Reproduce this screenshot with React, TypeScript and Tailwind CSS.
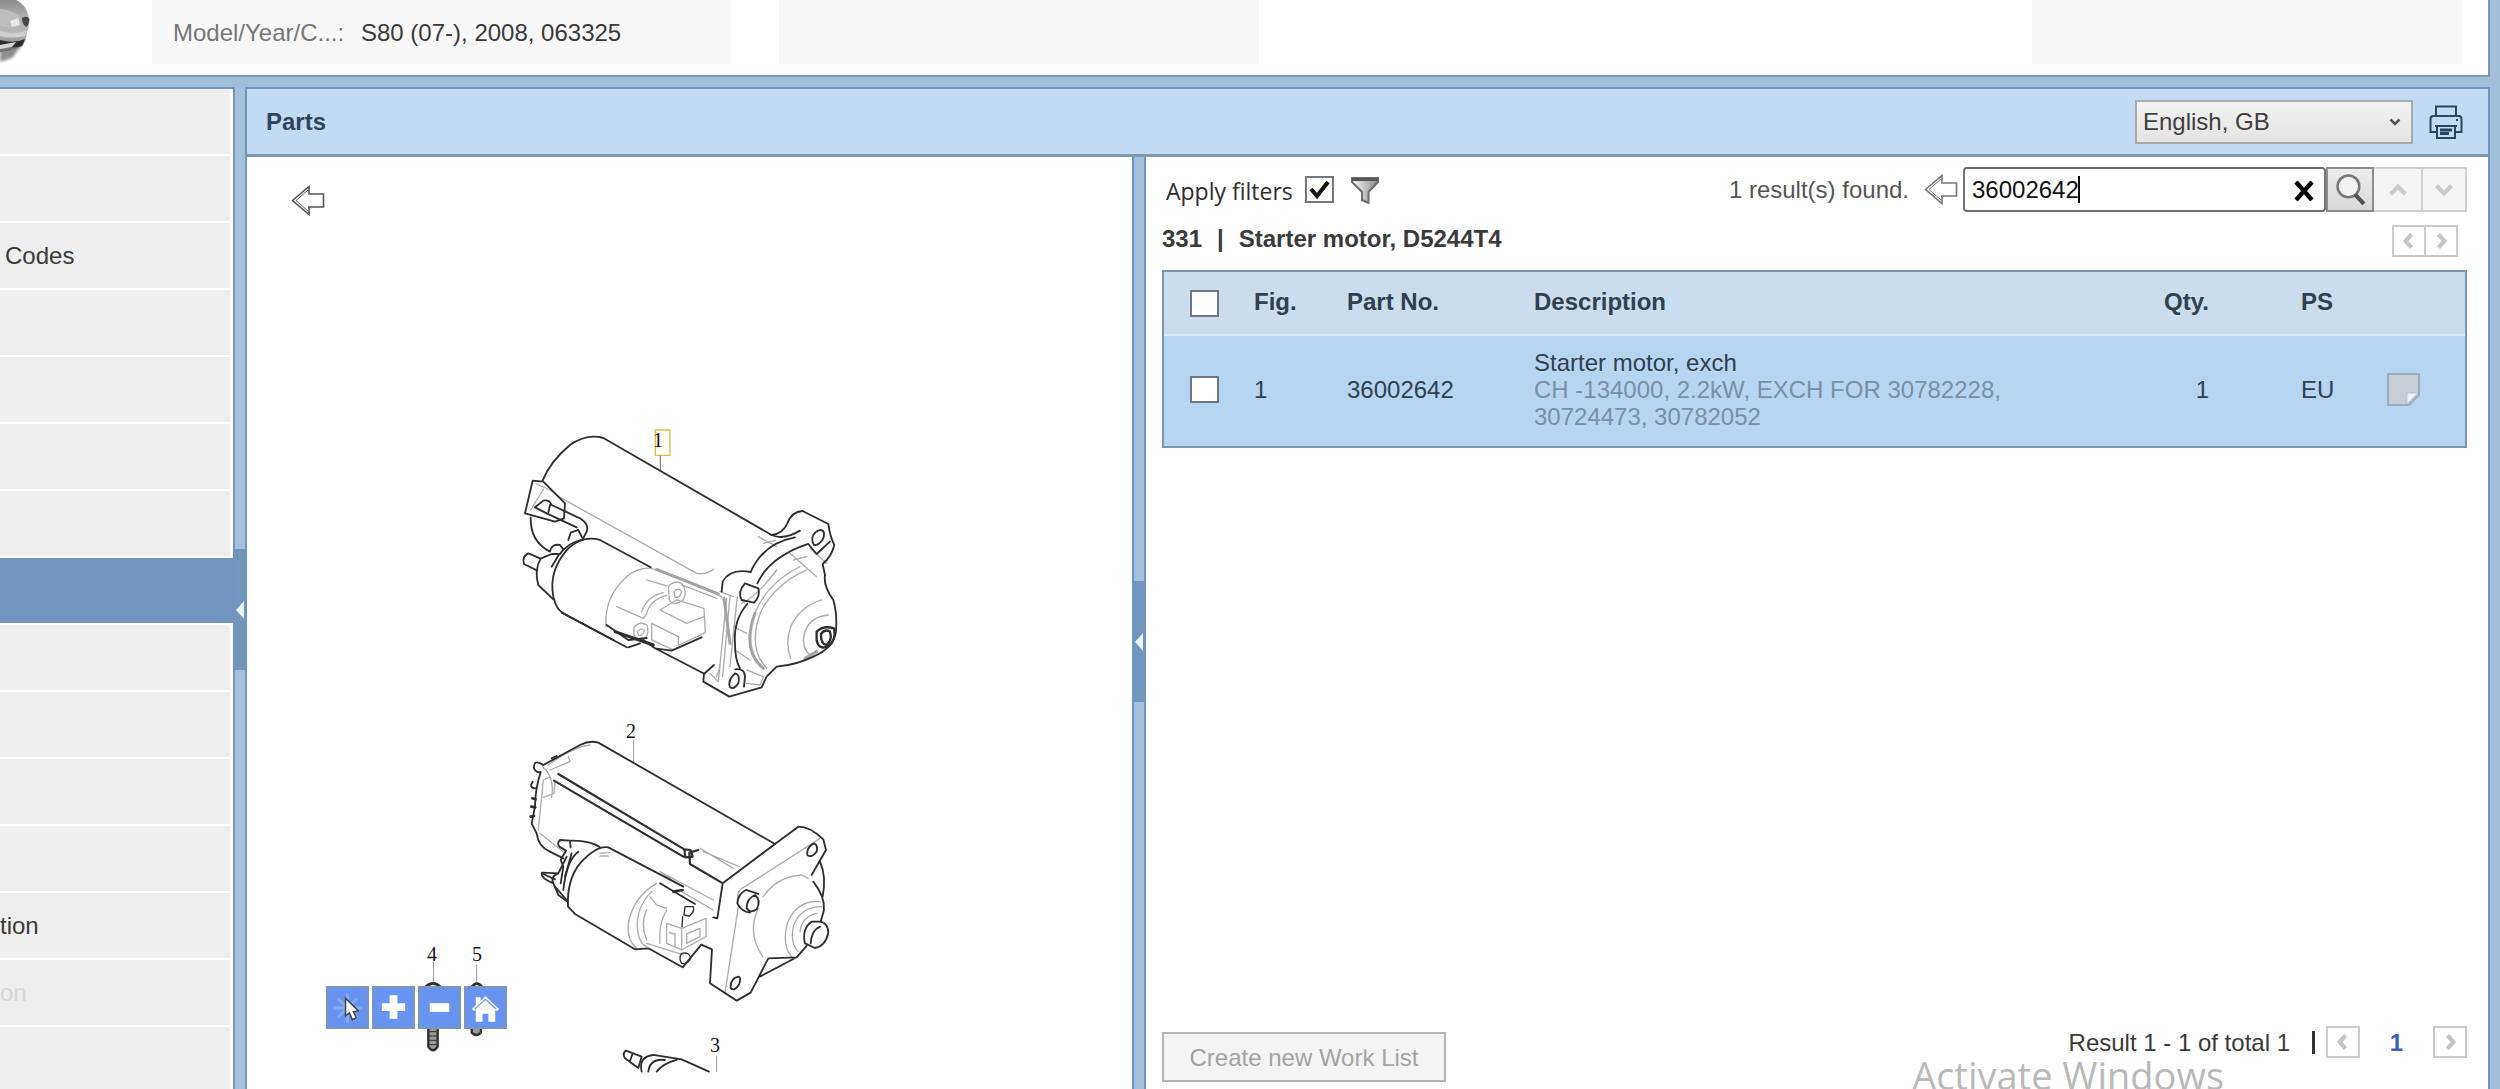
import React from "react";

const sidebarItems = [
  { label: "" },
  { label: "" },
  { label: "Codes", className: "pl-[5px]" },
  { label: "" },
  { label: "" },
  { label: "" },
  { label: "" },
  { label: "", selected: true },
  { label: "" },
  { label: "" },
  { label: "" },
  { label: "" },
  { label: "tion" },
  { label: "on", disabled: true },
  { label: "" },
  { label: "" },
];

type Direction = "left" | "right" | "up" | "down";

const chevrons: Record<Direction, string> = {
  left: "M15 4 L8 12 L15 20",
  right: "M9 4 L16 12 L9 20",
  up: "M3 17 L12 8 L21 17",
  down: "M3 7 L12 16 L21 7",
};

function Chevron({ direction, className }: { direction: Direction; className: string }) {
  return (
    <svg viewBox="0 0 24 24" fill="none" stroke="currentColor" strokeWidth="5" className={className} aria-hidden="true">
      <path d={chevrons[direction]} />
    </svg>
  );
}

function BackArrow({ className }: { className: string }) {
  return (
    <svg viewBox="0 0 34 30" fill="#fff" stroke="currentColor" strokeWidth="1.6" className={className} aria-hidden="true">
      <path d="M1.5 15 L18 1 V8.5 H32.5 V21.5 H18 V29 Z" />
      <path d="M5 15 L17 4.5 M5 15 L17 25.5" strokeWidth="1" />
    </svg>
  );
}

function CarPhoto() {
  return (
    <svg viewBox="0 0 60 64" className="h-16 w-[60px] shrink-0" role="img" aria-label="Vehicle">
      <defs>
        <linearGradient id="carBody" x1="0" y1="0" x2="0" y2="1">
          <stop offset="0" stopColor="#8b8b8b" />
          <stop offset="0.3" stopColor="#adadad" />
          <stop offset="0.65" stopColor="#b9b9b9" />
          <stop offset="1" stopColor="#6a6a6a" />
        </linearGradient>
        <filter id="carShadow" x="-20%" y="-60%" width="140%" height="220%">
          <feGaussianBlur stdDeviation="1.8" />
        </filter>
      </defs>
      <path d="M0 50 L22 45 L12 58 L0 62 Z" fill="#8f8f8f" filter="url(#carShadow)" />
      <path d="M0 0 H16 Q27 5 29 18 Q30 25 27 32 Q26 42 22 46 Q14 51 0 52 Z" fill="url(#carBody)" />
      <path d="M0 9 Q12 10 20 16 L18 27 Q8 28 0 26 Z" fill="#bdbdbd" />
      <path d="M10 21 L18 18 L20 25 L12 27 Z" fill="#e6e6e6" />
      <path d="M22 18 Q27 15 29.500 19 Q29 25 26 27 Q22 24 22 18 Z" fill="#474747" />
      <path d="M0 31 Q12 35 26 31 L25 36 Q12 39 0 36 Z" fill="#d0d0d0" />
      <path d="M0 40 Q14 44 25 39 L22 46 Q12 49 0 46 Z" fill="#2f2f2f" />
      <path d="M0 45 L16 42 L12 47 L0 49 Z" fill="#d5d5d5" />
    </svg>
  );
}

function PartsDrawing() {
  return (
    <svg
      viewBox="0 0 884 932"
      className="absolute top-0 left-0 h-[932px] w-[884px]"
      fill="none"
      stroke="#2e2e2e"
      strokeLinecap="round"
      strokeLinejoin="round"
      role="img"
      aria-label="Starter motor exploded view"
    >
      <g transform="translate(253 253) scale(0.3333)" strokeWidth="5.500">
        <rect x="466" y="60" width="44" height="76" fill="#fffdf0" stroke="#d9bd5e" strokeWidth="4" />
        <path d="M481 138 V180" stroke="#666" strokeWidth="3" />
        <g stroke="#acacac" strokeWidth="4">
          <path d="M110 222 L150 240 L180 262 L590 490 Q620 495 640 478 M92 300 L130 238" />
          <path d="M318 650 Q312 560 380 500 Q410 474 450 474 M450 474 L640 545 M440 510 L500 528 M350 590 L430 625 L440 610 Q450 570 500 556" />
          <path d="M425 605 Q440 560 490 548 M480 600 L530 570 L612 595 L616 668 L535 706 M480 600 L560 640 L612 620 M455 640 L535 680 V706 M455 640 V690 L520 720" />
          <path d="M505 530 Q520 510 545 520 Q565 545 548 572 Q520 590 508 570 Z M402 652 Q420 632 440 645 Q450 665 435 685 Q412 692 402 675 Z" />
          <path d="M522 545 Q535 530 545 545 Q540 565 525 562 Z M412 665 Q425 650 433 662 Q430 678 416 676 Z" />
          <path d="M690 560 L668 800 M712 560 L690 770 M660 545 L700 560 M650 800 L660 770 M680 565 L655 815 L630 790" />
          <path d="M900 470 Q800 520 765 610 Q725 720 785 770 M920 480 Q830 520 785 600 Q740 710 800 775" />
          <path d="M965 570 Q900 590 872 650 Q855 700 872 745 M985 615 Q925 620 912 675 Q905 715 930 735" />
          <path d="M775 380 L830 410 M790 400 L825 392 M870 430 L950 500 M880 450 L920 440 M930 415 L980 460 M700 650 L740 670 M705 720 L750 750 M740 780 L790 800 L780 825 L740 820" />
          <path d="M560 515 L665 560 M545 525 L650 565 M725 580 Q770 560 830 480" />
        </g>
        <g stroke="#a3a3a3" strokeWidth="9">
          <path d="M765 610 Q725 720 790 775 M672 565 L690 700 M915 745 L950 725 M470 478 L655 552" />
        </g>
        <path d="M128 212 Q150 155 210 105 Q260 70 310 84 L815 375" />
        <path d="M815 375 Q850 370 862 340 Q875 305 908 303 L985 342 Q990 380 1003 405 Q995 440 968 462 L975 495" />
        <path d="M815 375 Q850 392 900 362 M942 405 Q930 385 945 368 Q965 352 972 368 Q975 390 952 404 Z" />
        <path d="M752 486 Q790 400 885 382 M772 520 Q810 440 925 402 L950 432 L990 395" />
        <path d="M975 495 Q970 530 1000 570 Q1012 610 1008 665 Q1000 715 940 740 Q890 765 830 770 L800 800 L785 832 L688 860 L610 815 L612 790" />
        <path d="M752 486 Q690 475 668 515 L665 545 M735 520 L775 535 Q782 560 762 578 L725 570 Q712 545 735 520 Z" />
        <path d="M742 582 Q700 630 705 700 Q705 750 720 775 M706 778 Q735 775 735 800 L732 830 M706 790 Q722 795 715 820 Q702 840 690 832 Q682 810 706 790 Z" />
        <path d="M950 665 Q970 645 1002 655 Q1010 690 985 710 Q955 720 950 690 Z M963 672 Q975 655 990 665 Q998 690 980 705 Q962 702 963 672 Z" strokeWidth="7" />
        <path d="M612 792 L642 765 M610 790 L465 715 L430 690 M380 712 L185 608 M320 645 L385 690 L440 684 M385 712 L420 700 M465 715 L515 722 L605 682" />
        <path d="M345 665 L460 705" strokeWidth="9" />
        <path d="M98 212 L130 215 L195 280 L192 325 L165 335 L75 310 Z" />
        <path d="M105 292 L130 272 Q148 268 155 285 L240 325 Q268 342 260 365 L248 388 M105 292 L140 310 L230 352 M150 285 L145 308" />
        <path d="M92 322 Q90 395 150 425 M205 390 L212 368 L235 360 L246 382 M150 425 Q155 400 180 405 L190 418" />
        <path d="M122 446 L85 430 Q65 440 72 462 L112 482 M122 446 Q102 480 115 525 L160 568 M122 446 L155 432 L178 432 L155 470" />
        <path d="M452 472 L300 390 Q250 375 205 415 Q145 480 160 560 Q168 598 190 610 L340 690" />
        <path d="M180 432 Q200 400 250 388" />
      </g>

      <g transform="translate(253 553) scale(0.3333)" strokeWidth="5.500">
        <path d="M401 90 V156 M650 1038 V1085" stroke="#999" strokeWidth="3" />
        <g stroke="#acacac" strokeWidth="4">
          <path d="M145 165 Q220 110 270 105 M150 180 L210 155 L205 140 M128 170 Q165 200 155 262 M150 200 L130 210 L115 360 M165 215 L162 250 L130 262 M120 370 L195 430" />
          <path d="M610 425 L718 470 M600 415 L700 475 M480 485 L640 570 M545 545 L640 600 M480 485 L530 520" />
          <path d="M715 590 L675 850 M735 530 Q705 540 715 590 M735 530 L960 385 M790 560 Q830 500 905 495 L925 505" />
          <path d="M788 740 Q740 670 775 595 M960 575 Q890 570 862 640 Q845 705 875 740 M965 590 Q900 590 880 650 Q870 700 895 725 M950 610 Q905 620 900 665" />
          <path d="M300 430 L330 428 M300 438 L325 438" />
          <path d="M470 520 Q400 560 385 640 Q380 690 410 715 M455 545 Q410 590 412 650 Q415 700 440 710 M450 560 L470 585 L500 595 M440 600 Q420 640 440 690 M500 600 Q475 640 480 700" />
          <path d="M500 640 L545 655 L618 625 V680 L545 720 L500 700 Z M545 655 V720 M508 668 L525 672 V708 M560 672 L600 655 V680 L560 700 Z M440 700 L550 735" />
        </g>
        <path d="M130 165 L240 105 Q270 90 295 98 L825 402" />
        <path d="M825 402 L895 350 Q930 350 970 388 L978 420 L935 495 M960 455 Q980 500 968 560 M940 515 Q975 560 972 600 L962 635" />
        <path d="M825 402 L668 520 L652 625 L640 622 M942 400 Q920 410 922 435 Q935 445 950 425 Q955 405 942 400 Z" />
        <path d="M665 518 L570 462 L568 428 L595 420 M553 418 L175 192 M550 440 L162 212 M553 418 L572 420 L578 440 L556 442 Z" strokeWidth="6.500" />
        <path d="M604 704 L636 718 L630 820 L710 872 L752 848 L805 745 L890 742 L920 708 M890 742 L780 800 M716 800 Q690 805 692 835 Q705 845 718 822 Q724 802 716 800 Z" />
        <path d="M962 635 Q985 640 985 670 Q975 710 945 714 L915 700 Q905 655 935 635 Z M960 650 Q935 660 932 700" />
        <path d="M738 540 Q715 550 712 580 Q725 605 750 608 M738 540 L775 552 M765 555 Q740 565 740 595 Q750 612 770 598 Q785 570 765 555 Z" />
        <path d="M130 165 Q100 145 102 175 Q110 190 122 186 Q105 240 105 290 L95 340 L110 370 M98 215 Q85 235 108 235 M110 370 Q115 410 150 425 L190 445 M155 145 L170 138" />
        <path d="M97 265 L107 268 M94 290 L106 292 M92 320 L102 318" strokeWidth="8" />
        <path d="M585 582 L480 520 M550 530 L325 412 Q290 405 240 460 Q200 510 204 590 L225 612 L405 718 L445 715 L548 772 L604 704" />
        <path d="M555 590 L580 590 Q585 605 568 618 L552 615 Z M545 730 Q570 725 572 745 Q562 765 545 760 Q535 745 545 730 Z M548 620 L546 650" strokeWidth="4" />
        <path d="M300 412 Q270 390 210 392 L180 390 Q170 400 178 410 L198 422 L182 450 L190 470 M200 440 L175 490 L125 488 Q122 505 160 520 L175 555 L204 576 M175 490 Q150 500 160 520 M215 430 L195 500 M190 470 L182 520" />
        <path d="M210 395 L212 412 M235 425 Q200 450 190 540 M165 530 L200 570 M130 492 L165 508" />
        <path d="M548 540 L520 545" strokeWidth="8" />
        <path d="M378 1022 L425 1040 L415 1074 L375 1045 Q366 1030 378 1022 Z M398 1030 L390 1054" />
        <path d="M425 1085 Q415 1040 460 1035 L545 1048 L627 1085 M445 1085 Q450 1045 495 1050 M470 1085 Q490 1060 530 1050" />
      </g>

      <g transform="translate(62 773) scale(0.3333)">
        <path d="M374 95 V160 M503 104 V160" stroke="#999" strokeWidth="3" />
        <path d="M348 172 Q372 148 396 172 M488 172 Q503 150 520 172" strokeWidth="8" />
        <path d="M358 290 V350 Q372 372 386 350 V290 Z" fill="#9a9a9a" strokeWidth="7" />
        <path d="M358 305 H386 M358 318 H386 M358 331 H386 M358 344 H386" strokeWidth="3" />
        <path d="M488 290 V308 Q502 322 516 308 V290 Z" fill="#9a9a9a" strokeWidth="7" />
      </g>

      <g fill="#111" stroke="none" fontFamily="Liberation Serif, serif" fontSize="20" textAnchor="middle">
        <text x="411" y="290">1</text>
        <text x="384" y="581">2</text>
        <text x="468" y="895">3</text>
        <text x="185" y="804">4</text>
        <text x="230" y="804">5</text>
      </g>
    </svg>
  );
}

const toolClass =
  "flex h-[43px] w-[43px] items-center justify-center border-2 border-[#7f93bd] bg-[#6694ee]";

function DiagramToolbar() {
  return (
    <div className="absolute top-[829px] left-[79px] flex gap-[3px]">
      <button type="button" aria-label="Select" className={toolClass}>
        <svg viewBox="0 0 40 40" className="h-10 w-10">
          <path d="M20 5 V35 M5 20 H35 M10 10 L30 30 M30 10 L10 30" stroke="#86abf3" strokeWidth="3" />
          <path d="M18 10 L18 28 L22 25 L25 32 L29 30 L26 24 L31 23 Z" fill="#fff" stroke="#444" strokeWidth="1.500" />
        </svg>
      </button>
      <button type="button" aria-label="Zoom in" className={toolClass}>
        <svg viewBox="0 0 40 40" className="h-10 w-10">
          <path d="M16 7 H24 V15 H32 V23 H24 V31 H16 V23 H8 V15 H16 Z" fill="#fff" />
        </svg>
      </button>
      <button type="button" aria-label="Zoom out" className={toolClass}>
        <svg viewBox="0 0 40 40" className="h-10 w-10">
          <path d="M10 15 H30 V24 H10 Z" fill="#fff" />
        </svg>
      </button>
      <button type="button" aria-label="Home" className={toolClass}>
        <svg viewBox="0 0 40 40" className="h-10 w-10">
          <path d="M20 8 L34 21 L32 23 L30 22 V34 H23 V26 H17 V34 H10 V22 L8 23 L6 21 L10 17 V9 H15 V12.500 Z" fill="#fff" />
          <path d="M9 21 L20 11 L31 21" fill="none" stroke="#6694ee" strokeWidth="1.200" />
        </svg>
      </button>
    </div>
  );
}

function Splitter({ label, className }: { label: string; className: string }) {
  return (
    <div className="w-[14px] shrink-0 border-x-2 border-[#7395bd] bg-[#a6c1de]">
      <div className={className}>
        <button type="button" aria-label={label} className="flex h-[121px] w-full items-center justify-center bg-[#6f97bf]">
          <svg viewBox="0 0 10 20" className="h-5 w-[10px]">
            <path d="M9 1 L1 10 L9 19 Z" fill="#e8f6ff" />
          </svg>
        </button>
      </div>
    </div>
  );
}

const pagerClass = "flex h-8 w-[34px] items-center justify-center border-2 border-[#cacaca] bg-white text-[#c4c4c4]";

const checkboxClass = "block h-[27px] w-[29px] appearance-none border-2 border-[#6f7780] bg-white";

export default function App() {
  return (
    <div className="relative flex h-screen flex-col overflow-hidden bg-[#a3bed9] font-['Liberation_Sans',Arial,sans-serif] text-2xl leading-[27px] text-[#3a3a3a]">
      <header className="mr-[10px] flex h-[77px] shrink-0 items-start border-r-2 border-b-2 border-[#7f97ad] bg-white">
        <div className="w-[152px] shrink-0">
          <CarPhoto />
        </div>
        <div className="flex h-16 w-[578px] items-center bg-[#f8f8f8] pl-[21px]">
          <span className="w-[188px] text-[#777]">Model/Year/C...:</span>
          <span>S80 (07-), 2008, 063325</span>
        </div>
        <div className="ml-[49px] h-16 w-[480px] bg-[#f8f8f8]" />
        <div className="mr-[26px] ml-auto h-16 w-[430px] bg-[#f8f8f8]" />
      </header>

      <div className="mt-[10px] flex min-h-0 flex-1">
        <nav className="w-[233px] shrink-0 overflow-hidden border-t-2 border-[#7395bd] bg-white">
          <ul>
            {sidebarItems.map((item, i) => (
              <li key={i} className={item.selected ? "border-b-2 border-white" : "border-b-2 border-white pr-[3px]"}>
                <button
                  type="button"
                  disabled={item.disabled}
                  aria-label={item.label || "Menu item " + (i + 1)}
                  className={
                    "flex h-[65px] w-full items-center " +
                    (item.selected ? "bg-[#7096c0] " : "bg-[#eeeeee] ") +
                    (item.disabled ? "text-[#d6d6d6] " : "") +
                    (item.className ?? "")
                  }
                >
                  {item.label}
                </button>
              </li>
            ))}
          </ul>
        </nav>

        <Splitter label="Collapse menu" className="mt-[462px]" />

        <main className="mr-[10px] flex min-w-0 flex-1 flex-col border-t-2 border-r-2 border-[#7395bd] bg-white">
          <div className="flex h-[68px] shrink-0 items-center border-b-[3px] border-[#8099b3] bg-[#c3daf3] pr-[25px] pl-[19px]">
            <h1 className="font-bold text-[#31445c]">Parts</h1>
            <div className="relative ml-auto">
              <select
                aria-label="Language"
                className="h-11 w-[278px] appearance-none border-2 border-[#a9a9a9] bg-linear-to-b from-[#f2f2f2] to-[#e6e4e2] pl-1.5 text-[#3f3f3f]"
              >
                <option>English, GB</option>
              </select>
              <Chevron direction="down" className="pointer-events-none absolute top-4 right-3 h-3 w-3 text-[#555]" />
            </div>
            <button type="button" aria-label="Print" className="ml-4">
              <svg viewBox="0 0 34 34" fill="none" stroke="#2c4260" strokeWidth="2" className="h-[34px] w-[34px]">
                <path d="M7 11 V1.500 H27 V11" />
                <path d="M7 27 H1.500 V14 Q1.500 11 4.500 11 H29.500 Q32.500 11 32.500 14 V27 H27" />
                <path d="M6 21 H28 M8 21 V33 H26 V21" />
                <path d="M11 25 H23 M11 28.500 H20" strokeWidth="3" />
                <path d="M27 15 H29" />
              </svg>
            </button>
          </div>

          <div className="flex min-h-0 flex-1">
            <section aria-label="Diagram" className="relative w-[885px] shrink-0 overflow-hidden">
              <button type="button" aria-label="Back" className="mt-[28px] ml-[44px]">
                <BackArrow className="h-[31px] w-[34px] text-[#555]" />
              </button>
              <PartsDrawing />
              <DiagramToolbar />
            </section>

            <Splitter label="Collapse diagram" className="mt-[424px]" />

            <section aria-label="Parts list" className="flex min-w-0 flex-1 flex-col pr-[21px] pl-[16px]">
              <div className="mt-[10px] flex h-[45px] items-center">
                <label className="flex items-center pl-1 font-['Open_Sans','Noto_Sans',sans-serif] text-[23px] text-[#2e2e2e]">
                  <span className="pt-1">Apply filters</span>
                  <span className="relative ml-3 block">
                    <input type="checkbox" defaultChecked className={checkboxClass} />
                    <svg viewBox="0 0 29 27" className="pointer-events-none absolute inset-0" fill="none" stroke="#111" strokeWidth="4">
                      <path d="M6 13 L12 20 L23 6" />
                    </svg>
                  </span>
                </label>
                <button type="button" aria-label="Filter" className="ml-4">
                  <svg viewBox="0 0 30 28" className="h-[28px] w-[30px]">
                    <defs>
                      <linearGradient id="funnel" x1="0" x2="1">
                        <stop offset="0" stopColor="#fafafa" />
                        <stop offset="1" stopColor="#8a8a8a" />
                      </linearGradient>
                    </defs>
                    <path d="M2 2 H28 V6 L18.500 16 V27 L12 24 V16 L2 6 Z" fill="url(#funnel)" stroke="#6d6d6d" strokeWidth="2" />
                    <path d="M2 3.500 H28" stroke="#555" strokeWidth="3" />
                  </svg>
                </button>
                <span className="ml-auto text-[#555]">1 result(s) found.</span>
                <button type="button" aria-label="Previous search" className="mr-[5px] ml-[15px]">
                  <BackArrow className="h-[31px] w-[34px] text-[#777]" />
                </button>
                <div className="relative">
                  <input
                    type="text"
                    aria-label="Search parts"
                    defaultValue="36002642"
                    className="h-[45px] w-[363px] rounded-sm border-2 border-[#707070] bg-white pl-[7px] text-[#111]"
                  />
                  <span className="pointer-events-none absolute top-[9px] left-[115px] h-[27px] w-0.5 bg-black" />
                  <button type="button" aria-label="Clear search" className="absolute top-[14px] right-[12px]">
                    <svg viewBox="0 0 20 20" stroke="#000" strokeWidth="4.500" className="h-5 w-5">
                      <path d="M2 1 L18 19 M18 1 L2 19" />
                    </svg>
                  </button>
                </div>
                <button type="button" aria-label="Search" className="flex h-[45px] w-12 items-center justify-center border-2 border-[#8c8c8c] bg-linear-to-b from-[#ececec] to-[#d9d9d9]">
                  <svg viewBox="0 0 30 30" fill="none" className="h-[31px] w-[31px]">
                    <circle cx="13" cy="12" r="10.500" fill="#f1f1f1" stroke="#777" strokeWidth="2.500" />
                    <path d="M19.500 20 L28 29" stroke="#555" strokeWidth="4" />
                  </svg>
                </button>
                <button type="button" aria-label="Previous match" className="flex h-[45px] w-[47px] items-center justify-center border-y-2 border-[#cfcfcf] bg-[#f4f4f4] text-[#cbcbcb]">
                  <Chevron direction="up" className="h-5 w-5" />
                </button>
                <button type="button" aria-label="Next match" className="flex h-[45px] w-[46px] items-center justify-center border-2 border-[#cfcfcf] bg-[#f4f4f4] text-[#cbcbcb]">
                  <Chevron direction="down" className="h-5 w-5" />
                </button>
              </div>

              <div className="mt-[13px] flex h-[33px] items-start pr-[9px]">
                <h2 className="flex font-bold">
                  331<span className="mx-[15px] font-bold">|</span>Starter motor, D5244T4
                </h2>
                <div className="ml-auto flex">
                  <button type="button" aria-label="Previous section" className={pagerClass}>
                    <Chevron direction="left" className="h-5 w-5" />
                  </button>
                  <button type="button" aria-label="Next section" className={pagerClass + " -ml-0.5"}>
                    <Chevron direction="right" className="h-5 w-5" />
                  </button>
                </div>
              </div>

              <table className="mt-3 w-full table-fixed border-separate border-spacing-0 border-2 border-[#7b95ad] text-left text-[#31404f]">
                <colgroup>
                  <col className="w-[90px]" />
                  <col className="w-[93px]" />
                  <col className="w-[187px]" />
                  <col />
                  <col className="w-[190px]" />
                  <col className="w-[86px]" />
                  <col className="w-[78px]" />
                </colgroup>
                <thead>
                  <tr className="h-[64px] bg-[#cbdcec]">
                    <th className="border-b-2 border-[#dcebfa] pl-[26px]">
                      <input type="checkbox" aria-label="Select all parts" className={checkboxClass} />
                    </th>
                    <th className="border-b-2 border-[#dcebfa] pb-[3px]">Fig.</th>
                    <th className="border-b-2 border-[#dcebfa] pb-[3px]">Part No.</th>
                    <th className="border-b-2 border-[#dcebfa] pb-[3px]">Description</th>
                    <th className="border-b-2 border-[#dcebfa] pr-[92px] pb-[3px] text-right">Qty.</th>
                    <th className="border-b-2 border-[#dcebfa] pb-[3px]">PS</th>
                    <th className="border-b-2 border-[#dcebfa]" aria-label="Notes" />
                  </tr>
                </thead>
                <tbody>
                  <tr className="h-[110px] bg-[#b7d5f2]">
                    <td className="pb-[3px] pl-[26px]">
                      <input type="checkbox" aria-label="Select part 36002642" className={checkboxClass} />
                    </td>
                    <td className="pb-[3px]">1</td>
                    <td className="pb-[3px]">36002642</td>
                    <td className="pb-[3px]">
                      <div>Starter motor, exch</div>
                      <div className="text-[#7b8fa5]">CH -134000, 2.2kW, EXCH FOR 30782228, 30724473, 30782052</div>
                    </td>
                    <td className="pr-[92px] pb-[3px] text-right">1</td>
                    <td className="pb-[3px]">EU</td>
                    <td className="pb-[3px]">
                      <button type="button" aria-label="Note" className="block">
                        <svg viewBox="0 0 33 33" className="h-[33px] w-[33px]">
                          <path d="M1 1 H32 V22 L22 32 H1 Z" fill="#c6cdd4" stroke="#9eabb8" strokeWidth="2" />
                          <path d="M20 31 V20 H31 Z" fill="#f0f5fa" stroke="#b4bfca" strokeWidth="1" />
                        </svg>
                      </button>
                    </td>
                  </tr>
                </tbody>
              </table>

              <div className="mt-auto mb-[7px] flex items-start justify-between">
                <button type="button" disabled className="mt-[6px] h-[50px] w-[284px] border-2 border-[#b4b4b4] bg-[#f4f4f4] text-[#a3a3a3]">
                  Create new Work List
                </button>
                <div className="flex items-center">
                  <span>Result 1 - 1 of total 1</span>
                  <span className="mr-[11px] ml-[22px] h-[23px] w-[3px] bg-[#333]" aria-hidden="true" />
                  <button type="button" aria-label="Previous page" className={pagerClass}>
                    <Chevron direction="left" className="h-5 w-5" />
                  </button>
                  <a href="#page-1" className="w-[73px] text-center font-bold text-[#3f5fc4]">
                    1
                  </a>
                  <button type="button" aria-label="Next page" className={pagerClass}>
                    <Chevron direction="right" className="h-5 w-5" />
                  </button>
                </div>
              </div>
            </section>
          </div>
        </main>
      </div>

      <p className="pointer-events-none absolute right-[276px] -bottom-[5px] font-['Open_Sans','Noto_Sans',sans-serif] text-[38px] leading-[38px] text-[#b9b9b9]">
        Activate Windows
      </p>
    </div>
  );
}
